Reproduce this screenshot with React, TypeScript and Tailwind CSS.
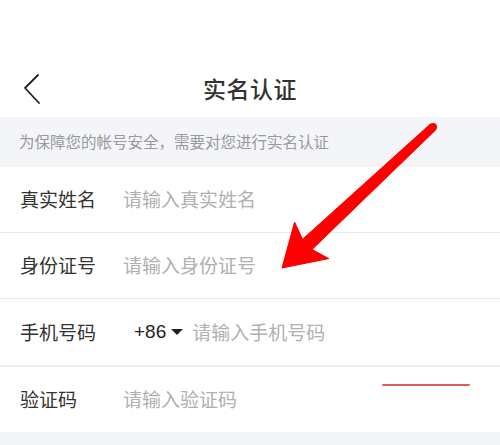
import React from "react";

const rows = [
  { label: "真实姓名", placeholder: "请输入真实姓名" },
  { label: "身份证号", placeholder: "请输入身份证号" },
];

const App = () => {
  return (
    <div
      className="relative w-[500px] h-[445px] overflow-hidden bg-white"
      style={{ fontFamily: '"Noto Sans CJK SC", "Noto Sans", sans-serif' }}
    >
      {/* status bar space */}
      <div className="h-[60px]" />

      {/* Header */}
      <div className="relative flex items-center justify-center h-[57px]">
        <svg className="absolute left-[20px] top-[12px]" width="24" height="34" viewBox="0 0 24 34">
          <path d="M18 3 L5 16 L19 31" fill="none" stroke="#222" strokeWidth="1.8" strokeLinecap="round" strokeLinejoin="round" />
        </svg>
        <h1 className="text-[23px] font-medium text-[#333] tracking-[0.5px]">实名认证</h1>
      </div>

      {/* Notice */}
      <div className="flex items-center h-[50px] px-[19px] bg-[#f3f5f8]">
        <p className="text-[15.5px] text-[#9a9a9a]">为保障您的帐号安全，需要对您进行实名认证</p>
      </div>

      {/* Form rows */}
      {rows.map((r) => (
        <div key={r.label} className="flex items-center h-[66px] px-[20px] border-b border-[#e9e9ee]">
          <span className="w-[103px] text-[19px] text-[#333]">{r.label}</span>
          <span className="text-[19px] text-[#b0b0b0]">{r.placeholder}</span>
        </div>
      ))}

      <div className="flex items-center h-[68px] px-[20px] border-b-2 border-[#ececf0]">
        <span className="w-[114px] text-[19px] text-[#333]">手机号码</span>
        <span className="text-[19px] text-[#222]" style={{ fontFamily: '"Liberation Sans", "Noto Sans CJK SC", sans-serif' }}>
          +86
        </span>
        <svg className="ml-[5px] mr-[9px]" width="12" height="8" viewBox="0 0 12 8">
          <path d="M0 1 L12 1 L6 7 Z" fill="#222" />
        </svg>
        <span className="text-[19px] text-[#b0b0b0]">请输入手机号码</span>
      </div>

      <div className="relative flex items-center h-[65px] px-[20px]">
        <span className="w-[103px] text-[19px] text-[#333]">验证码</span>
        <span className="text-[19px] text-[#b0b0b0]">请输入验证码</span>
        <div className="absolute left-[382px] top-[17px] w-[88px] h-[2px] rounded-full bg-[#e25c5c]" />
      </div>

      <div className="h-[20px] bg-[#f3f5f8]" />

      {/* Annotation arrow */}
      <svg className="absolute inset-0 pointer-events-none" width="500" height="445" viewBox="0 0 500 445">
        <polygon
          points="430.3,124.1 302.5,239.3 294.6,222 282,268 328.8,258.6 312.1,249.5 435.7,129.9"
          fill="#ff0000"
          stroke="#ff0000"
          strokeWidth="1"
          strokeLinejoin="round"
        />
        <circle cx="433" cy="127" r="4" fill="#ff0000" />
      </svg>
    </div>
  );
};

export default App;
